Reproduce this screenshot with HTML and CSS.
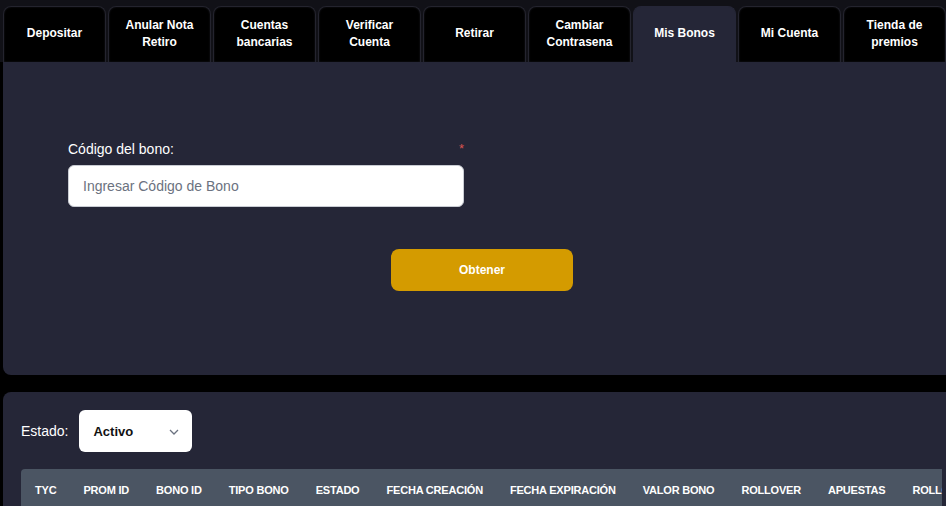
FILE: index.html
```html
<!DOCTYPE html>
<html lang="es">
<head>
<meta charset="utf-8">
<title>Mis Bonos</title>
<link rel="stylesheet" href="styles.css">
</head>
<body>
<nav class="tabs">
  <div class="tab">Depositar</div>
  <div class="tab">Anular Nota<br>Retiro</div>
  <div class="tab">Cuentas<br>bancarias</div>
  <div class="tab">Verificar<br>Cuenta</div>
  <div class="tab">Retirar</div>
  <div class="tab">Cambiar<br>Contrasena</div>
  <div class="tab active">Mis Bonos</div>
  <div class="tab">Mi Cuenta</div>
  <div class="tab">Tienda de<br>premios</div>
</nav>
<section class="panel panel-form">
  <div class="field">
    <div class="label-row">
      <label class="label" for="codigo">Código del bono:</label>
      <span class="req">*</span>
    </div>
    <input id="codigo" class="input" type="text" placeholder="Ingresar Código de Bono">
  </div>
  <div class="btn-row">
    <button class="btn">Obtener</button>
  </div>
</section>
<section class="panel panel-table">
  <div class="filter">
    <span class="filter-label">Estado:</span>
    <div class="select">
      <span>Activo</span>
      <svg class="chev" width="10" height="6" viewBox="0 0 10 6"><path d="M1 1l4 4 4-4" fill="none" stroke="#6b7280" stroke-width="1.3"/></svg>
    </div>
  </div>
  <div class="table-wrap">
    <table class="table">
      <thead>
        <tr>
          <th>TYC</th><th>PROM ID</th><th>BONO ID</th><th>TIPO BONO</th><th>ESTADO</th><th>FECHA CREACIÓN</th><th>FECHA EXPIRACIÓN</th><th>VALOR BONO</th><th>ROLLOVER</th><th>APUESTAS</th><th>ROLLOVER FALTANTE</th>
        </tr>
      </thead>
    </table>
  </div>
</section>
</body>
</html>
```
FILE: styles.css
```css
* { box-sizing: border-box; }
html, body { margin: 0; padding: 0; }
body {
  background: #000;
  font-family: "Liberation Sans", Arial, sans-serif;
  color: #fff;
  width: 946px;
  height: 506px;
  overflow: hidden;
}
.tabs {
  display: flex;
  gap: 2px;
  padding: 6px 0 0 3px;
  background: #111117;
  height: 62px;
}
.tab {
  flex: 0 0 103px;
  height: 56px;
  background: #000;
  border: 1px solid #24242e;
  border-bottom: none;
  border-radius: 8px 8px 0 0;
  box-shadow: inset 0 0 2px rgba(80,80,100,0.35);
  display: flex;
  align-items: center;
  justify-content: center;
  text-align: center;
  font-weight: bold;
  font-size: 12px;
  line-height: 17px;
  padding-bottom: 2px;
}
.tab.active {
  background: #252637;
  border-color: #252637;
  box-shadow: none;
}
.panel {
  margin-left: 3px;
  background: #252637;
}
.panel-form {
  height: 313px;
  border-radius: 0 0 0 8px;
  padding: 79px 0 0 65px;
  margin-bottom: 17px;
}
.field { width: 396px; }
.label-row {
  display: flex;
  justify-content: space-between;
  height: 16px;
  margin-bottom: 8px;
}
.label { font-size: 14px; line-height: 16px; }
.req {
  color: #d9534f;
  font-size: 13px;
  line-height: 10px;
  margin-top: 3px;
  margin-right: 0;
}
.input {
  display: block;
  width: 396px;
  height: 42px;
  border: 1px solid #c9ccd3;
  border-radius: 6px;
  background: #fff;
  padding: 0 14px;
  font-family: "Liberation Sans", Arial, sans-serif;
  font-size: 14px;
  color: #111;
  outline: none;
}
.input::placeholder { color: #6b7280; }
.btn-row { padding: 42px 0 0 323px; }
.btn {
  width: 182px;
  height: 42px;
  border: none;
  border-radius: 8px;
  background: #d49b00;
  color: #fff;
  font-family: "Liberation Sans", Arial, sans-serif;
  font-weight: bold;
  font-size: 12px;
}
.panel-table {
  height: 200px;
  border-radius: 8px 0 0 0;
  padding: 18px 0 0 18px;
}
.filter {
  display: flex;
  align-items: center;
  gap: 11px;
}
.filter-label { font-size: 14px; }
.select {
  width: 113px;
  height: 42px;
  background: #fff;
  border-radius: 6px;
  display: flex;
  align-items: center;
  justify-content: space-between;
  padding: 0 13px 0 14px;
  color: #111;
  font-weight: bold;
  font-size: 13px;
}
.chev { margin-top: 1px; }
.table-wrap {
  margin-top: 17px;
  width: 921px;
  overflow: hidden;
  border-radius: 4px 0 0 0;
}
.table {
  border-collapse: collapse;
  background: #4b5563;
}
.table th {
  white-space: nowrap;
  font-size: 11px;
  line-height: 13px;
  font-weight: bold;
  letter-spacing: -0.2px;
  text-align: left;
  padding: 15px 13.5px;
  color: #fff;
}
.table th:first-child { padding-left: 14px; }
```
